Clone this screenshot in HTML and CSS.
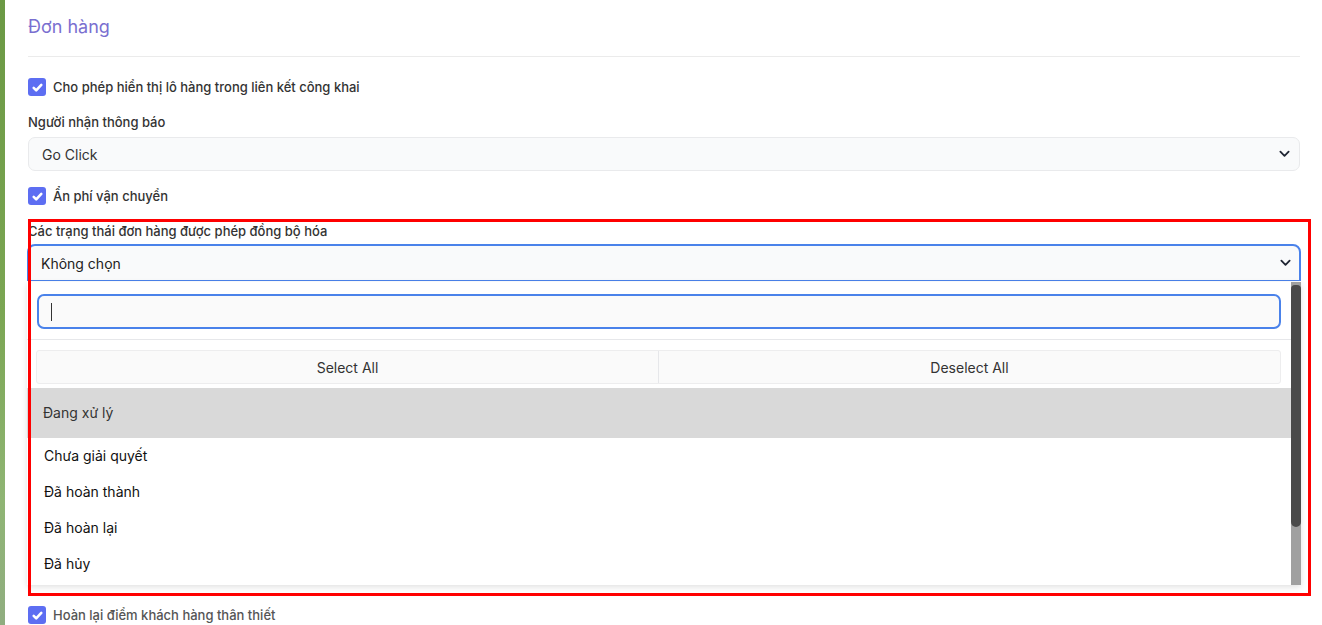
FILE: index.html
```html
<!DOCTYPE html>
<html lang="vi">
  <head>
    <meta charset="UTF-8" />
    <meta name="viewport" content="width=device-width, initial-scale=1.0" />
    <title>Đơn hàng</title>
    <link rel="stylesheet" href="styles.css">
  </head>
  <body>
    <div class="side-strip"></div>
    <div class="content">
      <h2 class="section-title">Đơn hàng</h2>

      <label class="check-row">
        <span class="check-box"><svg viewBox="0 0 12 12"><path d="M2.5 6.3l2.3 2.3 4.7-5" /></svg></span>
        Cho phép hiển thị lô hàng trong liên kết công khai
      </label>

      <div class="field">
        <div class="field-label">Người nhận thông báo</div>
        <div class="select">
          <span>Go Click</span>
          <svg class="chevron" viewBox="0 0 12 8"><path d="M1.5 1.5l4.5 4.5 4.5-4.5" /></svg>
        </div>
      </div>

      <label class="check-row">
        <span class="check-box"><svg viewBox="0 0 12 12"><path d="M2.5 6.3l2.3 2.3 4.7-5" /></svg></span>
        Ẩn phí vận chuyển
      </label>

      <div class="field field-sync">
        <div class="field-label">Các trạng thái đơn hàng được phép đồng bộ hóa</div>
        <div class="select select-open">
          <span>Không chọn</span>
          <svg class="chevron" viewBox="0 0 12 8"><path d="M1.5 1.5l4.5 4.5 4.5-4.5" /></svg>
        </div>
        <div class="dropdown">
          <div class="dropdown-body">
            <div class="search-wrap">
              <div class="search-input"><span class="caret"></span></div>
            </div>
            <div class="bulk-actions">
              <button class="bulk-btn">Select All</button>
              <button class="bulk-btn">Deselect All</button>
            </div>
            <ul class="options">
              <li class="option hover">Đang xử lý</li>
              <li class="option">Chưa giải quyết</li>
              <li class="option">Đã hoàn thành</li>
              <li class="option">Đã hoàn lại</li>
              <li class="option">Đã hủy</li>
            </ul>
          </div>
          <div class="scrollbar"><div class="scroll-thumb"></div></div>
        </div>
        <div class="highlight-box"></div>
      </div>

      <label class="check-row check-last">
        <span class="check-box"><svg viewBox="0 0 12 12"><path d="M2.5 6.3l2.3 2.3 4.7-5" /></svg></span>
        Hoàn lại điểm khách hàng thân thiết
      </label>
    </div>
  </body>
</html>
```

FILE: styles.css
```css
*,
*::before,
*::after {
  box-sizing: border-box;
  padding: 0;
  margin: 0;
}
body {
  height: 100vh;
  overflow: hidden;
  display: flex;
  background: #fff;
  font-family: Inter, "Noto Sans", sans-serif;
  color: #333;
}
.side-strip {
  width: 5px;
  flex-shrink: 0;
  background: linear-gradient(#6b9944, #7ba653 50%, #8fb574 80%, #90ad80);
}
.content {
  flex: 1;
  padding: 14px 22px 0 23px;
}
.section-title {
  font-size: 18px;
  line-height: 26px;
  font-weight: 400;
  color: #7a6fd0;
  padding-bottom: 16px;
  border-bottom: 1px solid #ebebeb;
  margin-bottom: 21px;
}
.check-row {
  display: flex;
  align-items: center;
  gap: 7px;
  height: 18px;
  font-size: 13px;
  font-weight: 500;
  color: #333;
  margin-bottom: 17px;
}
.check-box {
  width: 18px;
  height: 18px;
  border-radius: 3px;
  background: #5d6ef2;
  display: flex;
  align-items: center;
  justify-content: center;
}
.check-box svg {
  width: 13px;
  height: 13px;
  fill: none;
  stroke: #fff;
  stroke-width: 2.4;
  stroke-linecap: round;
  stroke-linejoin: round;
}
.field {
  margin-bottom: 16px;
}
.field-label {
  font-size: 13px;
  line-height: 18px;
  font-weight: 500;
  color: #333;
  margin-bottom: 6px;
}
.select {
  height: 34px;
  display: flex;
  align-items: center;
  justify-content: space-between;
  padding: 0 9px 0 13px;
  background: #f9fafb;
  border: 1px solid #e9eaec;
  border-radius: 7px;
  font-size: 14px;
  color: #333;
}
.chevron {
  width: 11px;
  height: 8px;
  fill: none;
  stroke: #1f2533;
  stroke-width: 2;
  stroke-linecap: round;
  stroke-linejoin: round;
}
.field-sync {
  position: relative;
  margin-bottom: 21px;
}
.field-sync .field-label {
  margin-bottom: 4px;
}
.select-open {
  height: 37px;
  margin: 0 -1px;
  padding: 0 8px 0 12px;
  border: 2px solid #4a82ea;
  border-bottom-width: 1px;
  border-radius: 8px 8px 0 0;
  color: #222;
}
.dropdown {
  display: flex;
  margin: 1px -1px 0;
  height: 303px;
  background: #fff;
  box-shadow: 0 2px 6px rgba(0, 0, 0, 0.12);
}
.dropdown-body {
  flex: 1;
  padding-top: 12px;
}
.search-wrap {
  padding: 0 10px 10px;
  border-bottom: 1px solid #e6e7ea;
}
.search-input {
  height: 35px;
  border: 2px solid #4a82ea;
  border-radius: 7px;
  background: #fafafa;
  display: flex;
  align-items: center;
  padding-left: 12px;
}
.caret {
  width: 1px;
  height: 18px;
  background: #333;
}
.bulk-actions {
  display: flex;
  margin: 10px 10px 0 9px;
  border: 1px solid #ededee;
  border-radius: 3px;
  background: #fafafa;
}
.bulk-btn {
  flex: 1;
  height: 32px;
  border: none;
  background: none;
  font-family: inherit;
  font-size: 14px;
  color: #333;
}
.bulk-btn + .bulk-btn {
  border-left: 1px solid #e6e7ea;
}
.options {
  list-style: none;
  margin-top: 4px;
}
.option {
  height: 36px;
  display: flex;
  align-items: center;
  padding-left: 17px;
  padding-bottom: 1px;
  font-size: 14px;
  color: #111;
}
.option.hover {
  height: 50px;
  padding-left: 16px;
  padding-bottom: 2px;
  background: #d9d9d9;
  color: #333;
}
.scrollbar {
  width: 10px;
  background: #a0a0a0;
  padding-top: 3px;
}
.scroll-thumb {
  height: 242px;
  background: #4a4a4a;
  border-radius: 4px 4px 5px 5px;
}
.highlight-box {
  position: absolute;
  top: -3px;
  left: 0;
  right: -11px;
  bottom: -11px;
  border: 3px solid #ff0000;
  pointer-events: none;
}
.check-last {
  color: #555;
}
```
